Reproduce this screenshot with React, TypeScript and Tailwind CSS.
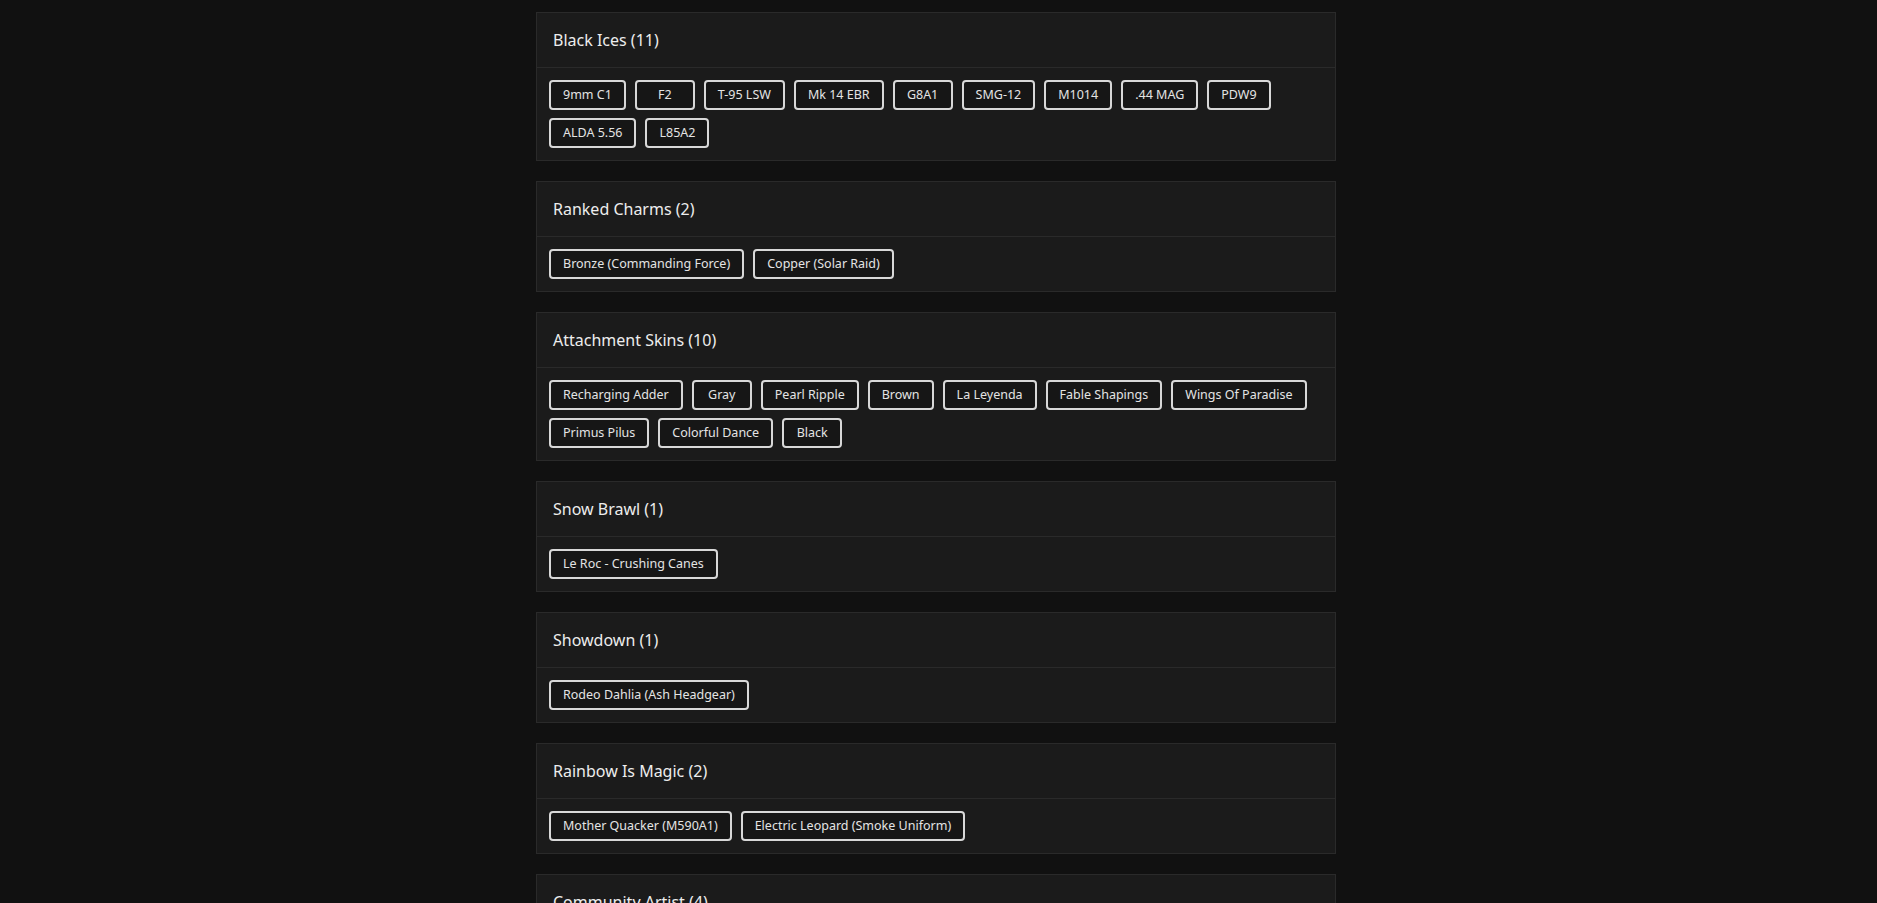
import React from 'react';

type Section = { title: string; items: string[] };

const sections: Section[] = [
  {
    title: 'Black Ices',
    items: ['9mm C1', 'F2', 'T-95 LSW', 'Mk 14 EBR', 'G8A1', 'SMG-12', 'M1014', '.44 MAG', 'PDW9', 'ALDA 5.56', 'L85A2'],
  },
  { title: 'Ranked Charms', items: ['Bronze (Commanding Force)', 'Copper (Solar Raid)'] },
  {
    title: 'Attachment Skins',
    items: [
      'Recharging Adder',
      'Gray',
      'Pearl Ripple',
      'Brown',
      'La Leyenda',
      'Fable Shapings',
      'Wings Of Paradise',
      'Primus Pilus',
      'Colorful Dance',
      'Black',
    ],
  },
  { title: 'Snow Brawl', items: ['Le Roc - Crushing Canes'] },
  { title: 'Showdown', items: ['Rodeo Dahlia (Ash Headgear)'] },
  { title: 'Rainbow Is Magic', items: ['Mother Quacker (M590A1)', 'Electric Leopard (Smoke Uniform)'] },
  { title: 'Community Artist', items: ['Moonshine', 'Pixel Cat', 'Neon Dreams', 'Painted Sky'] },
];

const SectionCard: React.FC<{ section: Section }> = ({ section }) => (
  <div className="mb-5 border border-[#2a2a2a] bg-[#1b1b1b]">
    <div className="border-b border-[#2a2a2a] px-4 py-4">
      <h2 className="text-[16px] leading-[22px] font-normal text-[#ededed]">
        {section.title} ({section.items.length})
      </h2>
    </div>
    <div className="flex flex-wrap gap-x-[9px] gap-y-2 p-3">
      {section.items.map((item) => (
        <button
          key={item}
          className="h-[30px] min-w-[60px] rounded-[4px] border-2 border-[#d8d8d8] bg-[#161616] px-3 text-[12.5px] text-[#e4e4e4]"
        >
          {item}
        </button>
      ))}
    </div>
  </div>
);

export default function App() {
  return (
    <div className="min-h-screen bg-[#111111] pt-3 pr-[5px]" style={{ fontFamily: '"Noto Sans", "Open Sans", sans-serif' }}>
      <div className="mx-auto w-[800px]">
        {sections.map((s) => (
          <SectionCard key={s.title} section={s} />
        ))}
      </div>
    </div>
  );
}
